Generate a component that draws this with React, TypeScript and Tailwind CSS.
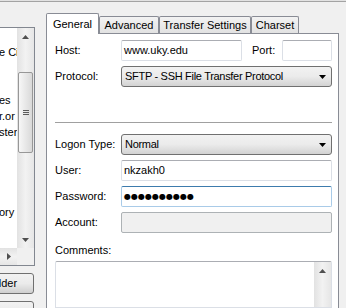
import React from 'react'

const font = "font-['Liberation_Sans',Arial,sans-serif]"

function Arrow({ dir, color = '#4f4f4f' }: { dir: 'up' | 'down' | 'right'; color?: string }) {
  const w = dir === 'right' ? 4 : 7
  const h = dir === 'right' ? 7 : 4
  const pts = dir === 'up' ? '0,4 7,4 3.5,0' : dir === 'down' ? '0,0 7,0 3.5,4' : '0,0 0,7 4,3.5'
  return (
    <svg width={w} height={h} viewBox={`0 0 ${w} ${h}`}>
      <polygon points={pts} fill={color} />
    </svg>
  )
}

const treeRows = ['', 'e Ci', '', '', 'es', 'r.or', 'ster', '', '', '', '', 'ory']

function SiteTree() {
  return (
    <div className="w-[35px] h-[239px] shrink-0 border-t border-r border-b border-[#828790] bg-white flex flex-col">
      <div className="flex flex-1 min-h-0">
        <div className="w-[17px] overflow-hidden">
          {treeRows.map((r, i) => (
            <div key={i} className="h-[16px] leading-[16px] whitespace-nowrap -ml-[1px] text-black">
              {r}
            </div>
          ))}
        </div>
        {/* vertical scrollbar */}
        <div className="w-[17px] flex flex-col bg-gradient-to-r from-[#e2e2e2] via-[#f2f2f2] to-[#e6e6e6]">
          <div className="h-[17px] flex items-center justify-center">
            <Arrow dir="up" />
          </div>
          <div className="mt-[27px] mx-[1px] h-[81px] rounded-[2px] border border-[#979797] bg-gradient-to-r from-[#f7f7f7] to-[#d9d9d9] flex flex-col items-center justify-center gap-[1px]">
            <div className="w-[6px] h-[1px] bg-[#5c5c5c]" />
            <div className="w-[6px] h-[1px] bg-[#5c5c5c]" />
            <div className="w-[6px] h-[1px] bg-[#5c5c5c]" />
          </div>
          <div className="flex-1" />
          <div className="h-[17px] flex items-center justify-center">
            <Arrow dir="down" />
          </div>
        </div>
      </div>
      {/* horizontal scrollbar */}
      <div className="h-[17px] flex">
        <div className="w-[17px] flex items-center justify-center bg-gradient-to-b from-[#e2e2e2] via-[#f2f2f2] to-[#e6e6e6]">
          <Arrow dir="right" />
        </div>
        <div className="w-[17px] bg-[#f0f0f0]" />
      </div>
    </div>
  )
}

function WinButton({ label }: { label: string }) {
  return (
    <div className="-ml-[56px] w-[90px] h-[21px] shrink-0 rounded-[3px] border border-[#707070] bg-gradient-to-b from-[#f2f2f2] via-[#ebebeb] to-[#cfcfcf] flex items-center justify-center text-black">
      {label}
    </div>
  )
}

function Tab({ label, active, w }: { label: string; active?: boolean; w: string }) {
  if (active) {
    return (
      <div className={`${w} h-[21px] border border-b-0 border-[#898c95] rounded-t-[2px] bg-white flex items-center justify-center text-black`}>
        {label}
      </div>
    )
  }
  return (
    <div className={`${w} h-[17px] mb-[1px] border border-b-0 border-[#898c95] rounded-t-[2px] bg-gradient-to-b from-[#f3f3f3] to-[#e2e2e2] flex items-center justify-center text-black`}>
      {label}
    </div>
  )
}

function TextBox({ w, value, focused, disabled }: { w: string; value?: React.ReactNode; focused?: boolean; disabled?: boolean }) {
  const border = focused
    ? 'border-[#a9cbe8] border-t-[#3d7bad] bg-white'
    : disabled
      ? 'border-[#adb2b5] bg-[#f0f0f0]'
      : 'border-[#dbdfe6] border-t-[#abadb3] bg-white'
  return (
    <div className={`${w} h-[21px] shrink-0 border rounded-[2px] ${border} flex items-center pl-[2px] text-black whitespace-nowrap overflow-hidden`}>
      {value}
    </div>
  )
}

function Combo({ value }: { value: string }) {
  return (
    <div className="w-[211px] h-[21px] shrink-0 rounded-[3px] border border-[#707070] bg-gradient-to-b from-[#f2f2f2] via-[#ebebeb] to-[#d3d3d3] flex items-center pl-[3px] pr-[5px] text-black">
      <span className="flex-1 whitespace-nowrap tracking-[-0.3px]">{value}</span>
      <Arrow dir="down" color="#000" />
    </div>
  )
}

function FieldRow({ label, children, className = '' }: { label: string; children: React.ReactNode; className?: string }) {
  return (
    <div className={`flex items-center h-[21px] shrink-0 ${className}`}>
      <div className="w-[66px] shrink-0 text-black whitespace-nowrap">{label}</div>
      {children}
    </div>
  )
}

function PasswordDots({ n }: { n: number }) {
  return (
    <div className="flex items-center">
      {Array.from({ length: n }).map((_, i) => (
        <span key={i} className="w-[7px] text-[8px] leading-none font-['DejaVu_Sans',sans-serif]">●</span>
      ))}
    </div>
  )
}

export default function App() {
  return (
    <div className={`${font} text-[11px] w-[346px] h-[308px] overflow-hidden bg-[#f0f0f0] flex flex-col`}>
      <div className="h-[1px] shrink-0 bg-[#e2e2e2]" />
      <div className="h-[1px] shrink-0 bg-[#a3a3a3]" />

      <div className="flex flex-1 min-h-0">
        {/* Left: site tree */}
        <div className="w-[35px] shrink-0 pt-[25px] flex flex-col">
          <SiteTree />
          <div className="mt-[7px] shrink-0">
            <WinButton label="New Folder" />
          </div>
          <div className="mt-[7px] shrink-0">
            <WinButton label="Rename" />
          </div>
        </div>

        {/* Right: tab control */}
        <div className="ml-[11px] w-[293px] shrink-0 pt-[11px] flex flex-col">
          <div className="relative z-10 flex items-end h-[21px] shrink-0">
            <Tab label="General" active w="w-[53px]" />
            <Tab label="Advanced" w="w-[60px]" />
            <Tab label="Transfer Settings" w="w-[92px]" />
            <Tab label="Charset" w="w-[48px]" />
          </div>

          <div className="-mt-[1px] flex-1 border border-b-0 border-[#898c95] bg-white pl-[8px] pr-[6px] pt-[6px] flex flex-col">
            <FieldRow label="Host:">
              <TextBox w="w-[121px]" value="www.uky.edu" />
              <div className="ml-[10px] w-[30px] text-black">Port:</div>
              <TextBox w="w-[50px]" />
            </FieldRow>
            <FieldRow label="Protocol:" className="mt-[5px]">
              <Combo value="SFTP - SSH File Transfer Protocol" />
            </FieldRow>

            <div className="mt-[35px] h-[1px] shrink-0 bg-[#a0a0a0]" />

            <FieldRow label="Logon Type:" className="mt-[11px]">
              <Combo value="Normal" />
            </FieldRow>
            <FieldRow label="User:" className="mt-[5px]">
              <TextBox w="w-[211px]" value="nkzakh0" />
            </FieldRow>
            <FieldRow label="Password:" className="mt-[5px]">
              <TextBox w="w-[211px]" focused value={<PasswordDots n={10} />} />
            </FieldRow>
            <FieldRow label="Account:" className="mt-[5px]">
              <TextBox w="w-[211px]" disabled />
            </FieldRow>

            <div className="mt-[10px] h-[14px] leading-[14px] shrink-0 text-black">Comments:</div>

            <div className="mt-[4px] flex-1 border border-[#dbdfe6] border-t-[#abadb3] rounded-t-[2px] bg-white flex justify-end">
              <div className="w-[17px] flex flex-col bg-gradient-to-r from-[#e2e2e2] via-[#f2f2f2] to-[#e6e6e6]">
                <div className="h-[17px] flex items-center justify-center">
                  <Arrow dir="up" />
                </div>
              </div>
            </div>
          </div>
        </div>
      </div>
    </div>
  )
}
